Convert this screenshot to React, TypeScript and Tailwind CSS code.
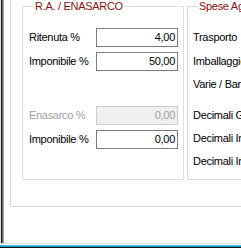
import React from 'react';

const font = { fontFamily: '"Liberation Sans", Arial, sans-serif' };

function Field({ label, value, disabled }: { label: string; value: string; disabled?: boolean }) {
  return (
    <div className="flex h-[24px] items-center">
      <span className={`w-[67px] shrink-0 ${disabled ? 'text-[#a0a0a0]' : 'text-black'}`}>{label}</span>
      <div
        className={`flex h-[19px] w-[82px] shrink-0 items-center justify-end pr-[2px] border ${
          disabled ? 'border-[#cccccc] bg-[#f0f0f0] text-[#a0a0a0]' : 'border-[#7a7a7a] bg-white text-black'
        }`}
      >
        {value}
      </div>
    </div>
  );
}

function Row({ label, h = 'h-[24px]' }: { label: string; h?: string }) {
  return (
    <div className={`flex ${h} items-center whitespace-nowrap text-black`}>{label}</div>
  );
}

export default function App() {
  return (
    <div
      className="flex h-[248px] w-[241px] flex-col overflow-hidden bg-white text-[11px] leading-[13px] tracking-[-0.3px]"
      style={font}
    >
      <div className="flex min-h-0 flex-1">
        {/* window frame left */}
        <div className="w-px bg-[#e6e6e6]" />
        <div className="w-px bg-[#101010]" />
        <div className="w-px bg-[#6b6b6b]" />
        <div className="w-px bg-[#a8a8a8]" />

        <div className="min-w-0 flex-1 bg-white">
          {/* outer panel */}
          <div className="ml-[6px] flex h-[207px] overflow-hidden border-b border-l border-[#d9d9d9] pl-[11px]">
            {/* R.A. / ENASARCO */}
            <fieldset className="h-[180px] w-[162px] shrink-0 border border-[#dcdcdc] pl-[6px]">
              <legend className="ml-[5px] px-px text-[#8b1010]">R.A. / ENASARCO</legend>
              <div className="mt-[12px]">
                <Field label="Ritenuta %" value="4,00" />
                <Field label="Imponibile %" value="50,00" />
                <div className="h-[30px]" />
                <Field label="Enasarco %" value="0,00" disabled />
                <Field label="Imponibile %" value="0,00" />
              </div>
            </fieldset>

            {/* Spese Agenti */}
            <fieldset className="ml-[3px] h-[180px] w-[160px] shrink-0 border border-[#dcdcdc] pl-[5px]">
              <legend className="ml-[5px] whitespace-nowrap px-px text-[#8b1010]">Spese Agenti</legend>
              <div className="mt-[12px]">
                <Row label="Trasporto" />
                <Row label="Imballaggio" />
                <Row label="Varie / Bancarie" h="h-[22px]" />
                <div className="h-[8px]" />
                <Row label="Decimali Giacenze" />
                <Row label="Decimali Imponibile" h="h-[23px]" />
                <Row label="Decimali Importi" h="h-[23px]" />
              </div>
            </fieldset>
          </div>
        </div>
      </div>

      {/* bottom frame */}
      <div className="h-px bg-[#d8d8d8]" />
      <div className="h-px bg-white" />
      <div className="h-px bg-[#3cc3e6]" />
      <div className="h-px bg-[#1a9cc8]" />
      <div className="h-px bg-[#101010]" />
    </div>
  );
}
